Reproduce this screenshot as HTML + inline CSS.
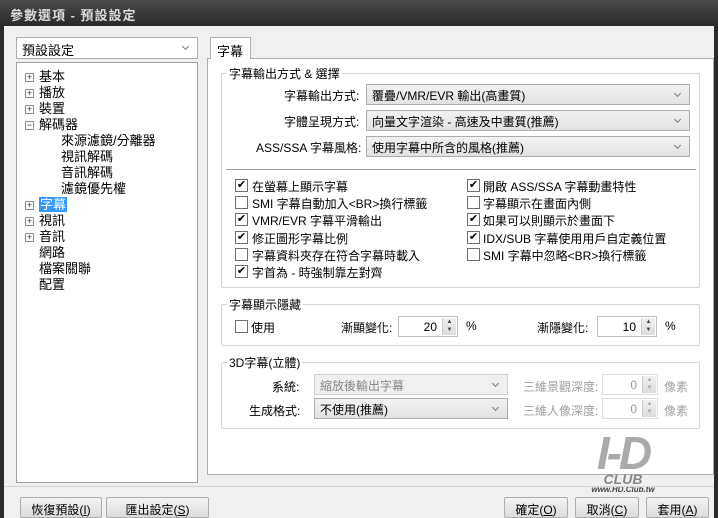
<!DOCTYPE html>
<html><head><meta charset="utf-8"><style>
*{margin:0;padding:0;box-sizing:border-box}
body{width:718px;height:518px;overflow:hidden;background:#2b2b2b;font-family:"Liberation Sans","Noto Sans CJK TC",sans-serif;font-size:12px;color:#000;position:relative}
.a{position:absolute}
.title{left:0;top:0;width:718px;height:26px;background:linear-gradient(#4a4a4a,#2a2a2a);color:#ddd;font-size:13px;font-weight:bold;padding:5px 0 0 10px;letter-spacing:1px}
.win{left:4px;top:26px;width:710px;height:492px;background:#f0f0f0}
.box{border:1px solid #a0a0a0;background:#fff}
.grp{border:1px solid #d5d5d5;border-radius:2px}
.gt{background:#fff;padding:0 2px;white-space:nowrap}
.dd{border:1px solid #adadad;background:linear-gradient(#f2f2f2,#e2e2e2);height:21px;padding:2px 5px;white-space:nowrap}
.dd:after{content:"";position:absolute;right:9px;top:6px;width:4px;height:4px;border-right:1.5px solid #777;border-bottom:1.5px solid #777;transform:rotate(45deg)}
.cb{width:13px;height:13px;border:1px solid #707070;background:#fff;font-size:11px;line-height:11px;text-align:center}
.t{white-space:nowrap}
.btn{border:1px solid #adadad;background:linear-gradient(#f2f2f2,#dcdcdc);height:21px;text-align:center;padding-top:3px;border-radius:2px}
.sp{border:1px solid #c0c0c0;background:#fff;height:21px;text-align:right;padding:3px 20px 0 0}
.sb{position:absolute;right:1px;top:1px;width:14px;height:17px;background:linear-gradient(#f0f0f0,#dcdcdc);border-left:1px solid #ccc;font-size:6px;line-height:8px;text-align:center;color:#444;padding:0}
.tree div{position:absolute;white-space:nowrap;font-size:13px}
.pm{display:inline-block;width:9px;height:9px;border:1px solid #919191;font-size:9px;line-height:7px;text-align:center;margin-right:5px;color:#333;background:#fff;vertical-align:1px}
</style></head><body>
<div class="a title">參數選項 - 預設設定</div>
<div class="a win"></div>
<div class="a dd" style="left:16px;top:37px;width:182px;height:22px;font-size:13px;background:#fff">預設設定</div>
<div class="a box tree" style="left:16px;top:62px;width:182px;height:421px;font-size:12px">
<div style="left:8px;top:3px"><span class="pm">+</span>基本</div>
<div style="left:8px;top:19px"><span class="pm">+</span>播放</div>
<div style="left:8px;top:35px"><span class="pm">+</span>裝置</div>
<div style="left:8px;top:51px"><span class="pm">−</span>解碼器</div>
<div style="left:44px;top:67px">來源濾鏡/分離器</div>
<div style="left:44px;top:83px">視訊解碼</div>
<div style="left:44px;top:99px">音訊解碼</div>
<div style="left:44px;top:115px">濾鏡優先權</div>
<div style="left:8px;top:131px"><span class="pm">+</span><span style="background:#3399ff;color:#fff;padding:0 1px">字幕</span></div>
<div style="left:8px;top:147px"><span class="pm">+</span>視訊</div>
<div style="left:8px;top:163px"><span class="pm">+</span>音訊</div>
<div style="left:22px;top:179px">網路</div>
<div style="left:22px;top:195px">檔案關聯</div>
<div style="left:22px;top:211px">配置</div>
</div>
<div class="a" style="left:207px;top:58px;width:507px;height:417px;border:1px solid #adadad;background:#fff"></div>
<div class="a t" style="left:210px;top:37px;width:41px;height:22px;border:1px solid #adadad;border-bottom:none;background:#fff;padding:3px 0 0 6px;font-size:13px">字幕</div>

<div class="a grp" style="left:221px;top:73px;width:479px;height:215px"></div>
<div class="a gt" style="left:227px;top:65px">字幕輸出方式 &amp; 選擇</div>
<div class="a t" style="left:284px;top:87px">字幕輸出方式:</div>
<div class="a t" style="left:284px;top:113px">字體呈現方式:</div>
<div class="a t" style="left:256px;top:139px">ASS/SSA 字幕風格:</div>
<div class="a dd" style="left:366px;top:84px;width:324px">覆疊/VMR/EVR 輸出(高畫質)</div>
<div class="a dd" style="left:366px;top:110px;width:324px">向量文字渲染 - 高速及中畫質(推薦)</div>
<div class="a dd" style="left:366px;top:136px;width:324px">使用字幕中所含的風格(推薦)</div>
<div class="a" style="left:226px;top:169px;width:470px;border-top:1px solid #a0a0a0"></div>

<div class="a cb" style="left:235px;top:179px">✔</div><div class="a t" style="left:252px;top:178px">在螢幕上顯示字幕</div>
<div class="a cb" style="left:235px;top:196px"></div><div class="a t" style="left:252px;top:195px">SMI 字幕自動加入&lt;BR&gt;換行標籤</div>
<div class="a cb" style="left:235px;top:213px">✔</div><div class="a t" style="left:252px;top:212px">VMR/EVR 字幕平滑輸出</div>
<div class="a cb" style="left:235px;top:231px">✔</div><div class="a t" style="left:252px;top:230px">修正圖形字幕比例</div>
<div class="a cb" style="left:235px;top:248px"></div><div class="a t" style="left:252px;top:247px">字幕資料夾存在符合字幕時載入</div>
<div class="a cb" style="left:235px;top:265px">✔</div><div class="a t" style="left:252px;top:264px">字首為 - 時強制靠左對齊</div>
<div class="a cb" style="left:467px;top:179px">✔</div><div class="a t" style="left:483px;top:178px">開啟 ASS/SSA 字幕動畫特性</div>
<div class="a cb" style="left:467px;top:196px"></div><div class="a t" style="left:483px;top:195px">字幕顯示在畫面內側</div>
<div class="a cb" style="left:467px;top:213px">✔</div><div class="a t" style="left:483px;top:212px">如果可以則顯示於畫面下</div>
<div class="a cb" style="left:467px;top:231px">✔</div><div class="a t" style="left:483px;top:230px">IDX/SUB 字幕使用用戶自定義位置</div>
<div class="a cb" style="left:467px;top:248px"></div><div class="a t" style="left:483px;top:247px">SMI 字幕中忽略&lt;BR&gt;換行標籤</div>

<div class="a grp" style="left:221px;top:304px;width:479px;height:42px"></div>
<div class="a gt" style="left:227px;top:296px">字幕顯示隱藏</div>
<div class="a cb" style="left:235px;top:320px"></div><div class="a t" style="left:251px;top:319px">使用</div>
<div class="a t" style="left:341px;top:319px">漸顯變化:</div>
<div class="a sp" style="left:398px;top:316px;width:60px">20<div class="sb">▲<br>▼</div></div>
<div class="a t" style="left:466px;top:319px">%</div>
<div class="a t" style="left:537px;top:319px">漸隱變化:</div>
<div class="a sp" style="left:597px;top:316px;width:60px">10<div class="sb">▲<br>▼</div></div>
<div class="a t" style="left:665px;top:319px">%</div>

<div class="a grp" style="left:221px;top:362px;width:479px;height:67px"></div>
<div class="a gt" style="left:227px;top:354px">3D字幕(立體)</div>
<div class="a t" style="left:272px;top:378px">系統:</div>
<div class="a t" style="left:249px;top:402px">生成格式:</div>
<div class="a dd" style="left:314px;top:374px;width:194px;color:#888;background:#f0f0f0;border-color:#d0d0d0">縮放後輸出字幕</div>
<div class="a dd" style="left:314px;top:398px;width:194px">不使用(推薦)</div>
<div class="a t" style="left:523px;top:378px;color:#a0a0a0">三維景觀深度:</div>
<div class="a t" style="left:523px;top:402px;color:#a0a0a0">三維人像深度:</div>
<div class="a sp" style="left:602px;top:374px;width:56px;color:#999;border-color:#ddd">0<div class="sb" style="color:#aaa">▲<br>▼</div></div>
<div class="a sp" style="left:602px;top:398px;width:56px;color:#999;border-color:#ddd">0<div class="sb" style="color:#aaa">▲<br>▼</div></div>
<div class="a t" style="left:664px;top:378px;color:#a0a0a0">像素</div>
<div class="a t" style="left:664px;top:402px;color:#a0a0a0">像素</div>

<div class="a" style="left:580px;top:433px;width:86px;height:60px;font-weight:bold;font-style:italic;color:#999;text-align:center">
<div style="font-size:46px;line-height:40px;letter-spacing:-3px;color:#aaa">I-D</div>
<div style="font-size:14px;line-height:12px;color:#888">CLUB</div>
<div style="font-size:8px;color:#444">www.HD.Club.tw</div></div>

<div class="a" style="left:4px;top:486px;width:710px;border-top:1px solid #d5d5d5"></div>
<div class="a btn" style="left:20px;top:497px;width:82px">恢復預設(<u>I</u>)</div>
<div class="a btn" style="left:106px;top:497px;width:103px">匯出設定(<u>S</u>)</div>
<div class="a btn" style="left:504px;top:497px;width:64px">確定(<u>O</u>)</div>
<div class="a btn" style="left:575px;top:497px;width:64px">取消(<u>C</u>)</div>
<div class="a btn" style="left:646px;top:497px;width:63px">套用(<u>A</u>)</div>
</body></html>
